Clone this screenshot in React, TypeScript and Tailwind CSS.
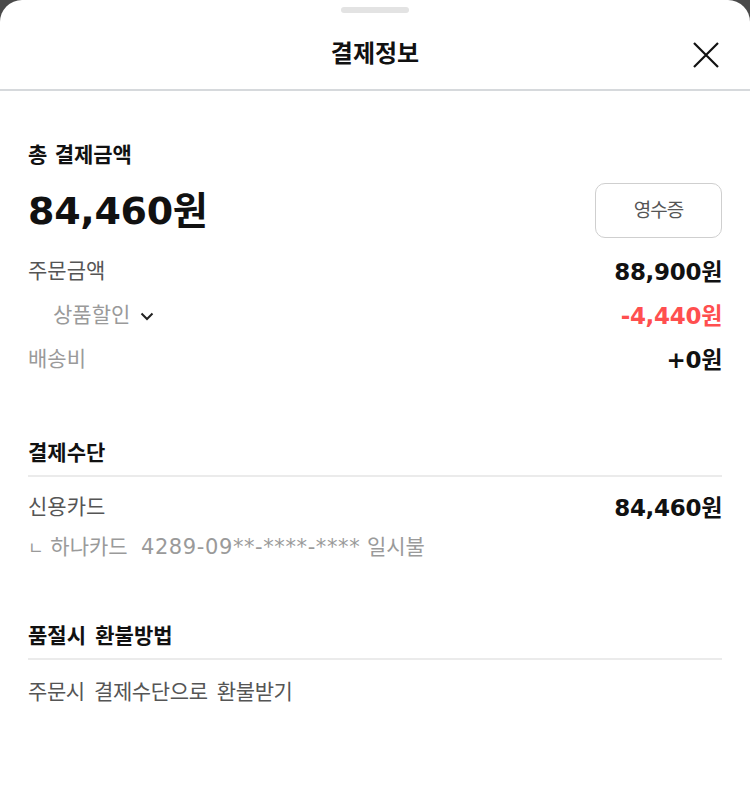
import React from 'react';

const font = { fontFamily: '"DejaVu Sans", "Noto Sans CJK KR", sans-serif' };

const Row: React.FC<{ label: React.ReactNode; value: string; valueClass?: string; labelClass?: string }> = ({
  label,
  value,
  valueClass = 'text-[#111]',
  labelClass = 'text-[#555]',
}) => (
  <div className="flex items-center justify-between h-[44px]">
    <div className={`text-[21px] ${labelClass}`}>{label}</div>
    <div className={`text-[23px] font-bold tracking-[-0.3px] ${valueClass}`}>{value}</div>
  </div>
);

export default function App() {
  return (
    <div className="w-[750px] h-[810px] bg-[#4a4a4a]" style={font}>
      <div className="w-full h-full bg-white rounded-t-[22px] flex flex-col">
        <div className="flex justify-center pt-[7px]">
          <div className="w-[68px] h-[6px] rounded-full bg-[#e3e3e3]" />
        </div>
        <div className="relative h-[78px] flex items-center justify-center border-b-2 border-[#d6d9dc]">
          <h1 className="text-[24px] font-bold text-[#111] mt-[6px]">결제정보</h1>
          <button className="absolute right-[30px] top-[28px] text-[#111]">
            <svg width="28" height="28" viewBox="0 0 28 28" fill="none" stroke="currentColor" strokeWidth="2.2">
              <path d="M2 2L26 26M26 2L2 26" />
            </svg>
          </button>
        </div>

        <div className="px-[28px]">
          <section className="pt-[50px]">
            <h2 className="h-[28px] leading-[28px] text-[21px] font-bold text-[#111]">총 결제금액</h2>
            <div className="flex items-center justify-between mt-[13px] h-[56px]">
              <div className="text-[38px] font-bold text-[#111] tracking-[-0.3px] mt-[2px]">84,460원</div>
              <button className="w-[127px] h-[55px] border border-[#cfcfcf] rounded-[10px] text-[19px] tracking-[-1px] text-[#555]">
                영수증
              </button>
            </div>
            <div className="mt-[12px]">
              <Row label="주문금액" value="88,900원" />
              <Row
                label={
                  <span className="flex items-center gap-[10px] pl-[25px]">
                    상품할인
                    <svg width="14" height="9" viewBox="0 0 14 9" fill="none" stroke="#222" strokeWidth="2">
                      <path d="M1.5 1.5L7 7L12.5 1.5" />
                    </svg>
                  </span>
                }
                labelClass="text-[#9a9a9a]"
                value="-4,440원"
                valueClass="text-[#ff4f4f]"
              />
              <Row label="배송비" labelClass="text-[#9a9a9a]" value="+0원" />
            </div>
          </section>

          <section className="pt-[57px]">
            <h2 className="h-[38px] leading-[28px] text-[21px] font-bold text-[#111] border-b-2 border-[#ebebeb]">
              결제수단
            </h2>
            <div className="pt-[9px]">
              <Row label="신용카드" value="84,460원" />
              <div className="mt-[3px] h-[28px] leading-[28px] text-[21px] text-[#9a9a9a]">
                <span className="text-[17px]">ㄴ</span> 하나카드&nbsp;&nbsp;
                <span className="tracking-[0.6px]">4289-09**-****-****</span> 일시불
              </div>
            </div>
          </section>

          <section className="pt-[61px]">
            <h2 className="h-[38px] leading-[28px] text-[21px] font-bold text-[#111] border-b-2 border-[#ebebeb] [word-spacing:2px]">
              품절시 환불방법
            </h2>
            <div className="pt-[18px] h-[46px] leading-[28px] text-[21px] tracking-[-0.4px] text-[#555] [word-spacing:3px]">
              주문시 결제수단으로 환불받기
            </div>
          </section>
        </div>
      </div>
    </div>
  );
}
